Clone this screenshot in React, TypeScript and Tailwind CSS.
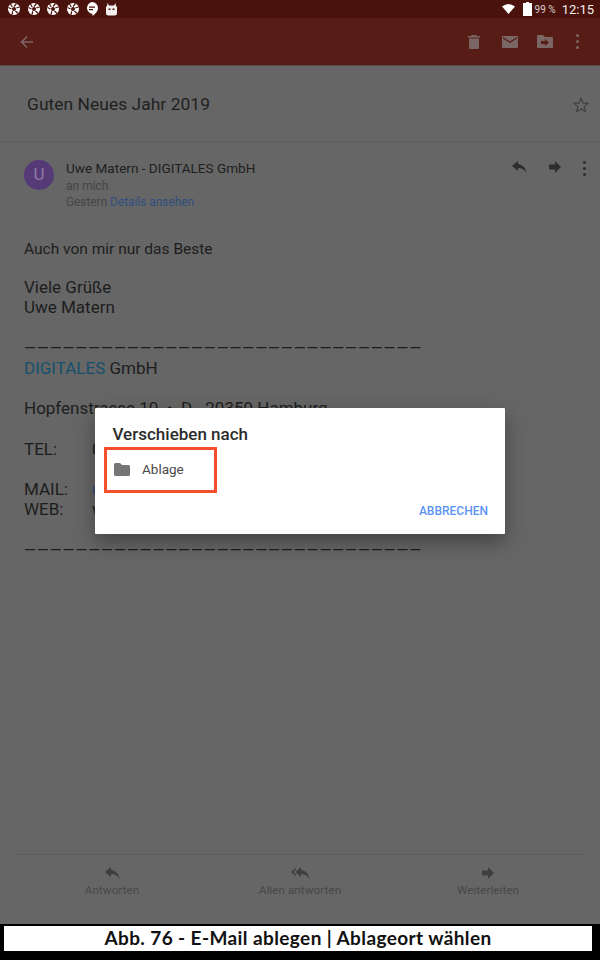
import React from 'react';

const Aperture = () => (
  <svg width="12" height="12" viewBox="0 0 24 24" className="shrink-0">
    <circle cx="12" cy="12" r="12" fill="#fff" />
    <g stroke="#4a120c" strokeWidth="2.4" fill="none">
      <path d="M12 7 L17 1" />
      <path d="M16.5 10 L23 8" />
      <path d="M15 16 L20 21" />
      <path d="M9.5 16.5 L8 23" />
      <path d="M7 12 L1 9" />
      <path d="M8.5 8 L5 2" />
    </g>
    <circle cx="12" cy="12" r="4" fill="#4a120c" />
  </svg>
);

const Hangouts = () => (
  <svg width="12" height="15" viewBox="0 0 24 30" className="shrink-0">
    <path d="M12 0a12 12 0 0 1 12 12c0 7-6 12-11 16v-4.200A12 12 0 0 1 12 0z" fill="#fff" />
    <rect x="6" y="9" width="12" height="2.500" fill="#4a120c" />
    <rect x="6" y="14" width="8" height="2.500" fill="#4a120c" />
  </svg>
);

const Robot = () => (
  <svg width="11" height="13" viewBox="0 0 22 26" className="shrink-0">
    <path d="M3 0l3 5h10l3-5 1 6a4 4 0 0 1 2 3v11a5 5 0 0 1-5 5H5a5 5 0 0 1-5-5V9a4 4 0 0 1 2-3z" fill="#f4eeee" />
    <rect x="5" y="11" width="4" height="3" fill="#4a120c" />
    <rect x="13" y="11" width="4" height="3" fill="#4a120c" />
  </svg>
);

const ReplyIcon = ({ className = '' }: { className?: string }) => (
  <svg width="15" height="12" viewBox="0 0 15 12" className={className}>
    <path d="M6 0 0 5l6 5V7c4 0 6.500 1.500 8.500 5C14 7.500 11 3.600 6 3z" fill="currentColor" />
  </svg>
);

const ReplyAllIcon = ({ className = '' }: { className?: string }) => (
  <svg width="19" height="12" viewBox="0 0 19 12" className={className}>
    <path d="M5 1 0 5l5 4V7.500L2.500 5 5 2.500z" fill="currentColor" />
    <path d="M10 0 4.500 5l5.500 5V7c4 0 6.500 1.500 8.500 5C18 7.500 15 3.600 10 3z" fill="currentColor" />
  </svg>
);

const ForwardIcon = ({ className = '' }: { className?: string }) => (
  <svg width="12" height="12" viewBox="0 0 12 12" className={className}>
    <path d="M6 0l6 6-6 6V8.500H0v-5h6z" fill="currentColor" />
  </svg>
);

const Dots = ({ className = '' }: { className?: string }) => (
  <div className={`flex flex-col gap-[3px] ${className}`}>
    <span className="w-[3px] h-[3px] rounded-full bg-current" />
    <span className="w-[3px] h-[3px] rounded-full bg-current" />
    <span className="w-[3px] h-[3px] rounded-full bg-current" />
  </div>
);

const dashes = '—'.repeat(31);

export default function App() {
  return (
    <div className="relative w-[600px] h-[960px] overflow-hidden bg-[#666666] flex flex-col font-['Roboto',sans-serif]">
      {/* status bar */}
      <div className="h-[18px] bg-[#4a120c] flex items-center pl-[8px] pr-[6px] shrink-0">
        <div className="flex items-center gap-[7.5px]">
          <Aperture />
          <Aperture />
          <Aperture />
          <Aperture />
          <Hangouts />
          <Robot />
        </div>
        <div className="ml-auto flex items-center">
          <svg width="13" height="10" viewBox="0 0 26 20" className="mr-[8px]">
            <path d="M0 5Q13-5 26 5L13 20z" fill="#fff" />
          </svg>
          <svg width="9" height="14" viewBox="0 0 9 14" className="mr-[3px]">
            <path d="M3 0h3v1h3v13H0V1h3z" fill="#fff" />
          </svg>
          <span className="text-[10px] text-[#d8cfce] mr-[6px]">99 %</span>
          <span className="text-[13px] leading-none text-[#f2eeee]">12:15</span>
        </div>
      </div>

      {/* toolbar */}
      <div className="h-[48px] bg-[#581c16] flex items-center shrink-0 border-b border-[#5c4a48] text-[#7a6665]">
        <svg width="14" height="14" viewBox="0 0 14 14" className="ml-[20px]">
          <path d="M13 7H2M7 1.500 1.500 7 7 12.500" stroke="currentColor" strokeWidth="1.600" fill="none" />
        </svg>
        <div className="ml-auto flex items-center">
          <svg width="12" height="14" viewBox="0 0 12 14" className="mr-[22px]">
            <path d="M4 0h4l1 1h3v1.500H0V1h3zM1 3.500h10V13a1 1 0 0 1-1 1H2a1 1 0 0 1-1-1z" fill="currentColor" />
          </svg>
          <svg width="16" height="12" viewBox="0 0 16 12" className="mr-[19px]">
            <path d="M1 0h14a1 1 0 0 1 1 1v10a1 1 0 0 1-1 1H1a1 1 0 0 1-1-1V1a1 1 0 0 1 1-1zm0 2.500L8 7l7-4.500V1L8 5.500 1 1z" fill="currentColor" />
          </svg>
          <svg width="16" height="13" viewBox="0 0 16 13" className="mr-[23px]">
            <path d="M1 0h5l2 2h7a1 1 0 0 1 1 1v9a1 1 0 0 1-1 1H1a1 1 0 0 1-1-1V1a1 1 0 0 1 1-1z" fill="currentColor" />
            <path d="M8 4l4 3.500L8 11V9H4V6h4z" fill="#581c16" />
          </svg>
          <Dots className="mr-[21px]" />
        </div>
      </div>

      {/* subject */}
      <div className="h-[76px] shrink-0 border-b border-[#5e5e5e] flex items-center pl-[27px] pr-[11px] pt-[1px]">
        <span className="text-[17.400px] text-[#1f1f1f] tracking-[0.05px]">Guten Neues Jahr 2019</span>
        <svg width="16" height="15" viewBox="0 0 24 23" className="ml-auto text-[#3f3f3f]">
          <path d="M12 2l3 7 7.500.700-5.700 5 1.700 7.300L12 18.200 5.500 22l1.700-7.300-5.700-5L9 9z" stroke="currentColor" strokeWidth="1.800" fill="none" />
        </svg>
      </div>

      {/* sender */}
      <div className="flex pl-[24px] pt-[18px] pr-[13px] shrink-0">
        <div className="w-[30px] h-[30px] rounded-full bg-[#553a77] flex items-center justify-center text-[#8d7ba4] text-[17px] shrink-0">
          U
        </div>
        <div className="ml-[12px] flex flex-col">
          <span className="text-[13.550px] leading-[17px] text-[#202020]">Uwe Matern - DIGITALES GmbH</span>
          <span className="text-[12px] leading-[16px] mt-[1px] text-[#454545]">an mich</span>
          <span className="text-[11.850px] leading-[17px] text-[#454545]">
            Gestern <span className="text-[#2f4f80]">Details ansehen</span>
          </span>
        </div>
        <div className="ml-auto flex items-start pt-[1px] text-[#2e2e2e]">
          <ReplyIcon className="mr-[22px]" />
          <ForwardIcon className="mr-[22px]" />
          <Dots className="mr-[1px]" />
        </div>
      </div>

      {/* body */}
      <div className="pl-[24px] mt-[28px] text-[17px] leading-[20px] text-[#1d1d1d] shrink-0 whitespace-pre">
        <p className="text-[15.500px]">Auch von mir nur das Beste</p>
        <p className="mt-[18px]">Viele Grüße</p>
        <p>Uwe Matern</p>
        <p className="mt-[21px] text-[15.300px] tracking-[0.9px]">{dashes}</p>
        <p>
          <span className="text-[#16506c]">DIGITALES</span> GmbH
        </p>
        <p className="mt-[20px]">Hopfenstrasse 10  •  D - 20359 Hamburg</p>
        <p className="mt-[21px] flex">
          <span className="w-[68px]">TEL:</span>
          <span>0</span>
        </p>
        <p className="mt-[20px] flex">
          <span className="w-[68px]">MAIL:</span>
          <span className="text-[#2f4f80]">u</span>
        </p>
        <p className="flex">
          <span className="w-[68px]">WEB:</span>
          <span>w</span>
        </p>
        <p className="mt-[21px] text-[15.300px] tracking-[0.9px]">{dashes}</p>
      </div>

      {/* bottom actions */}
      <div className="mt-auto mb-[63px] shrink-0">
        <div className="mx-[18px] border-t border-[#5c5c5c]" />
        <div className="grid grid-cols-3 mx-[18px] pt-[12px] text-[#3e3e3e]">
          <div className="flex flex-col items-center">
            <ReplyIcon />
            <span className="text-[11.800px] leading-[14px] mt-[4px] text-[#484848]">Antworten</span>
          </div>
          <div className="flex flex-col items-center">
            <ReplyAllIcon />
            <span className="text-[11.800px] leading-[14px] mt-[4px] text-[#484848]">Allen antworten</span>
          </div>
          <div className="flex flex-col items-center">
            <ForwardIcon />
            <span className="text-[11.800px] leading-[14px] mt-[4px] text-[#484848]">Weiterleiten</span>
          </div>
        </div>
      </div>

      {/* caption */}
      <div className="absolute left-0 right-0 bottom-0 h-[36px] bg-black pt-[2px] pl-[4px] pr-[8px]">
        <div className="h-[25px] bg-white flex items-center justify-center text-[19px] tracking-[0.4px] font-bold text-[#111] font-['Lato',sans-serif]">
          Abb. 76 - E-Mail ablegen | Ablageort wählen
        </div>
      </div>

      {/* dialog */}
      <div className="absolute left-[94.500px] top-[408px] w-[410.500px] h-[126px] bg-white rounded-[1px] shadow-[0_8px_20px_rgba(0,0,0,0.35)] flex flex-col">
        <div className="pl-[18px] pt-[17px] text-[17px] leading-[19px] font-medium text-[#2b2b2b]">Verschieben nach</div>
        <div className="flex items-center pl-[19px] mt-[15px] h-[20px]">
          <svg width="16" height="13" viewBox="0 0 16 13" className="text-[#757575]">
            <path d="M1.500 0h4.500l2 2h6.500A1.500 1.500 0 0 1 16 3.500V11.500a1.500 1.500 0 0 1-1.500 1.500h-13A1.500 1.500 0 0 1 0 11.500v-10A1.500 1.500 0 0 1 1.500 0z" fill="currentColor" />
          </svg>
          <span className="ml-[12.500px] text-[13.500px] text-[#4a4a4a]">Ablage</span>
        </div>
        <div className="mt-auto mb-[16px] pr-[17px] text-right text-[12px] font-medium leading-[14px] text-[#5c94f5]">ABBRECHEN</div>
      </div>

      {/* highlight */}
      <div className="absolute left-[104px] top-[447px] w-[113px] h-[46px] border-[3px] border-[#f4502d]" />
    </div>
  );
}
